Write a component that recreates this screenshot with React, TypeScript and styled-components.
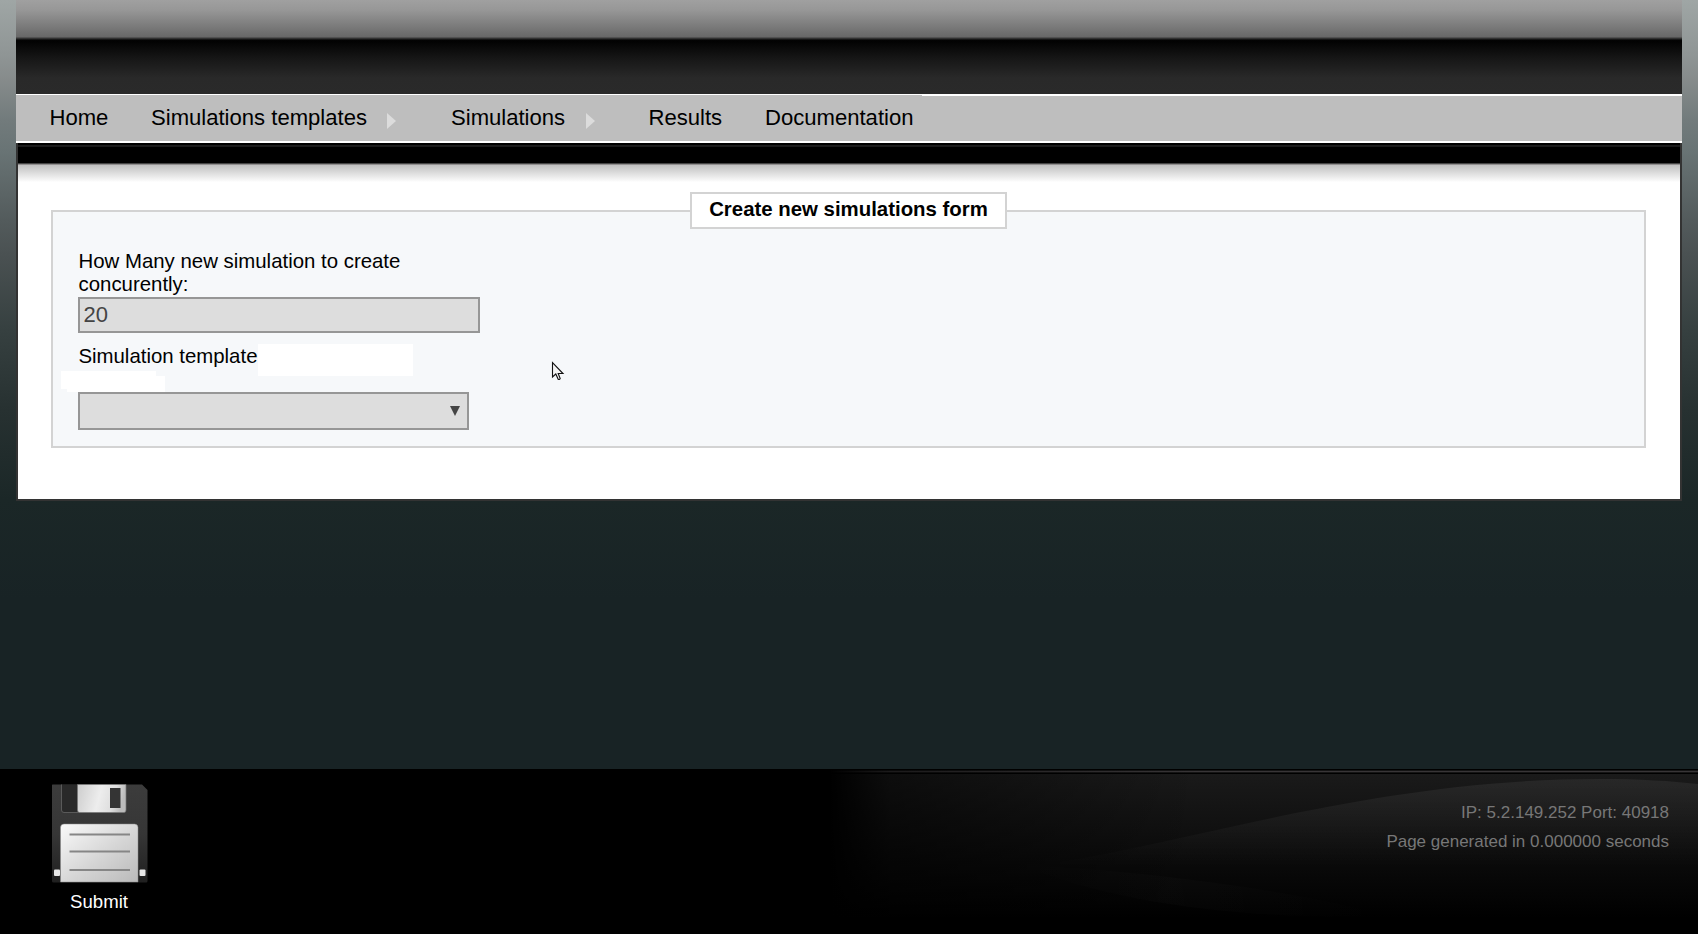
import React from 'react';
import styled, { createGlobalStyle } from 'styled-components';

const Global = createGlobalStyle`
  * { box-sizing: border-box; }
  html, body { margin: 0; height: 100%; overflow: hidden; }
  body { font-family: "Liberation Sans", Arial, sans-serif; background: #182325; }
`;

const Page = styled.div`
  position: relative;
  display: flex;
  flex-direction: column;
  height: 934px;
  background: linear-gradient(180deg, #9fa6a5 0px, #8f9595 55px, #868b8b 80px, #727b7c 120px, #697475 150px, #535b5c 220px,
    #4a5152 255px, #364040 330px, #273131 410px, #1b2727 500px, #182325 600px);
`;

const Sheet = styled.div`
  margin: 0 16px;
  display: flex;
  flex-direction: column;
`;

const Banner = styled.header`
  height: 94px;
  background: linear-gradient(180deg, #a0a0a0 0px, #979797 10px, #686868 37px, #3a3a3a 38px, #2a2a2a 39px, #050505 40px,
    #020202 41px, #161616 58px, #292929 78px, #2a2a2a 94px);
`;

const NavBar = styled.div`
  height: 49px;
  display: flex;
  background: #bebebe;
  border-top: 1px solid #fff;
  border-bottom: 2px solid #fff;
`;

const NavList = styled.nav`
  display: flex;
  width: 906px;
  padding-left: 33.5px;
`;

const NavItem = styled.a<{ $w: number }>`
  display: flex;
  flex: none;
  width: ${(p) => p.$w}px;
  height: 45px;
  font-size: 22.08px;
  line-height: 45px;
  white-space: nowrap;
  color: #000;
`;

const NavRest = styled.div`
  flex: 1;
  border-top: 1px solid #fff;
`;

const Arrow = styled.svg`
  width: 9px;
  height: 16px;
  margin: 18px 0 0 20.5px;
`;

const Panel = styled.main`
  height: 358px;
  border: 2px solid #333;
  border-top: 0;
  background: #fff linear-gradient(180deg, #000 0px, #000 1.5px, #1e1e1e 2px, #1a1a1a 3.5px, #000 4px, #000 20px, #444 20px,
    #444 21px, #918f8f 21px, #918f8f 22px, #c0c0c0 22px, #fafafa 38px, #fff 39px) no-repeat;
  padding: 49px 34px 0 33px;
`;

const Form = styled.fieldset`
  margin: 0;
  height: 256px;
  border: 2px solid #d3d3d3;
  padding: 0 25px;
  background: #f6f8fa;
  min-width: 0;
`;

const Legend = styled.legend`
  margin: 0 auto;
  width: 317px;
  height: 37px;
  border: 2px solid #d3d3d3;
  background: #fff;
  font-size: 20.4px;
  line-height: 31px;
  font-weight: bold;
  text-align: center;
  padding: 0;
`;

const Label = styled.label`
  display: block;
  width: 380px;
  margin-top: 21px;
  padding-left: 0.5px;
  font-size: 20.4px;
  line-height: 23px;
  color: #000;
`;

const NumberInput = styled.input`
  display: block;
  width: 402px;
  height: 36px;
  margin: 1px 0 11px;
  padding: 0 3.5px;
  border: 2px solid #969696;
  border-radius: 0;
  background: #ddd;
  color: #444;
  font: 22px "Liberation Sans", Arial, sans-serif;
`;

const TemplateRow = styled.div`
  display: flex;
  height: 32px;
  font-size: 20.4px;
  line-height: 24px;
  white-space: nowrap;
`;

const TemplateLabel = styled.label`
  width: 180px;
  padding-left: 0.4px;
`;

const Blank = styled.span`
  width: 155px;
  background: #fff;
`;

const BlankNote = styled.div`
  width: 104px;
  height: 21px;
  margin: -5px 0 0 -17px;
  background: #fff;
  clip-path: polygon(0 0, 95px 0, 95px 5px, 104px 5px, 104px 21px, 6px 21px, 6px 18px, 0 18px);
`;

const Select = styled.div`
  display: flex;
  justify-content: flex-end;
  width: 391px;
  height: 38px;
  border: 2px solid #969696;
  background: #ddd;
  padding: 12px 7px 0 0;
`;

const Footer = styled.footer`
  position: relative;
  height: 165px;
  margin-top: auto;
  background: #000;
  display: flex;
  justify-content: space-between;
`;

const Backdrop = styled.svg`
  position: absolute;
  right: 0;
  top: 0;
`;

const SubmitButton = styled.a`
  display: flex;
  flex-direction: column;
  align-items: center;
  gap: 7px;
  width: 98px;
  margin: 15px 0 0 50px;
  color: #fff;
  font-size: 18.6px;
  line-height: 22px;
`;

const Stats = styled.div`
  position: relative;
  margin: 29px 29px 0 0;
  font-size: 17px;
  line-height: 29px;
  color: #777;
  text-align: right;
`;

const Disk = styled.svg`
  filter: blur(0.6px);
`;

const Pointer = styled.svg`
  position: absolute;
  left: 551px;
  top: 361px;
`;

const SubmenuArrow = () => (
  <Arrow viewBox="0 0 9 16">
    <path d="M0 0L9 8L0 16Z" fill="#dcdcdc" />
  </Arrow>
);

const Floppy = () => (
  <Disk width="98" height="100" viewBox="0 0 98 100">
    <defs>
      <linearGradient id="body" x1="0" y1="0" x2="0" y2="1">
        <stop offset="0" stopColor="#3c3c3c" />
        <stop offset="0.5" stopColor="#363636" />
        <stop offset="1" stopColor="#202020" />
      </linearGradient>
      <linearGradient id="metal" x1="0" y1="0" x2="1" y2="0.15">
        <stop offset="0" stopColor="#cdcdcd" />
        <stop offset="0.5" stopColor="#ededed" />
        <stop offset="0.8" stopColor="#dedede" />
        <stop offset="1" stopColor="#bbb" />
      </linearGradient>
      <linearGradient id="paper" x1="0" y1="0" x2="1" y2="1">
        <stop offset="0" stopColor="#fafafa" />
        <stop offset="0.55" stopColor="#d5d5d5" />
        <stop offset="1" stopColor="#bababa" />
      </linearGradient>
    </defs>
    <path d="M2.5 0.5H92L97.5 6V97Q97.5 98.5 96 98.5H3.5Q2 98.5 2 97V1Z" fill="url(#body)" />
    <path d="M12 1H28V28H14Q12 28 12 26Z" fill="#292929" />
    <path d="M11.5 0.5V26Q11.5 28.5 14 28.5H28" fill="none" stroke="#5a5a5a" />
    <path d="M27.5 0.5H76V26Q76 28.5 74 28.5H29.5Q27.5 28.5 27.5 26Z" fill="url(#metal)" stroke="#777" strokeWidth="0.7" />
    <rect x="60" y="4" width="10.5" height="20" fill="#343434" />
    <path d="M10.5 98V43.5Q10.5 40 14 40H84.5Q88 40 88 43.5V98Z" fill="url(#paper)" stroke="#888" strokeWidth="0.5" />
    <path d="M19.5 50.5H80M19.5 67.5H80M19.5 86H80" stroke="#868686" strokeWidth="2" />
    <rect x="4" y="85.5" width="6" height="6.5" rx="1" fill="#e8e8e8" />
    <rect x="89.5" y="85.5" width="6" height="6.5" rx="1" fill="#e8e8e8" />
  </Disk>
);

const Waves = () => (
  <Backdrop width="868" height="165" viewBox="830 769 868 165">
    <defs>
      <linearGradient id="base" x1="0" y1="0" x2="0" y2="1">
        <stop offset="0" stopColor="#1a1a1a" />
        <stop offset="0.45" stopColor="#0d0d0d" />
        <stop offset="0.9" stopColor="#000" />
      </linearGradient>
      <linearGradient id="crest" gradientUnits="userSpaceOnUse" x1="0" y1="778" x2="0" y2="868">
        <stop offset="0" stopColor="#fff" stopOpacity="0.065" />
        <stop offset="0.35" stopColor="#fff" stopOpacity="0.045" />
        <stop offset="1" stopColor="#fff" stopOpacity="0" />
      </linearGradient>
      <linearGradient id="swell" gradientUnits="userSpaceOnUse" x1="1020" y1="0" x2="1390" y2="0">
        <stop offset="0" stopColor="#fff" stopOpacity="0" />
        <stop offset="0.4" stopColor="#fff" stopOpacity="0.015" />
        <stop offset="1" stopColor="#fff" stopOpacity="0" />
      </linearGradient>
      <linearGradient id="fade" gradientUnits="userSpaceOnUse" x1="830" y1="0" x2="1200" y2="0">
        <stop offset="0" stopColor="#000" />
        <stop offset="0.03" stopColor="#000" stopOpacity="0.9" />
        <stop offset="0.16" stopColor="#000" stopOpacity="0.5" />
        <stop offset="1" stopColor="#000" stopOpacity="0" />
      </linearGradient>
    </defs>
    <rect x="830" y="774" width="868" height="160" fill="url(#base)" />
    <path d="M1020 865C1130 870 1280 887 1390 916C1250 920 1120 905 1020 865Z" fill="url(#swell)" />
    <path d="M1060 862C1200 840 1380 779 1600 779C1640 779 1670 781 1698 784V868H1060Z" fill="url(#crest)" />
    <rect x="830" y="769" width="868" height="5" fill="#000" />
    <rect x="830" y="770" width="868" height="3" fill="#151515" />
    <rect x="830" y="771" width="868" height="1" fill="#383537" />
    <rect x="830" y="769" width="868" height="165" fill="url(#fade)" />
  </Backdrop>
);

export default function App() {
  return (
    <Page>
      <Global />
      <Sheet>
        <Banner />
        <NavBar>
          <NavList>
            <NavItem $w={101.5}>Home</NavItem>
            <NavItem $w={300}>Simulations templates<SubmenuArrow /></NavItem>
            <NavItem $w={197.5}>Simulations<SubmenuArrow /></NavItem>
            <NavItem $w={116.5}>Results</NavItem>
            <NavItem $w={148}>Documentation</NavItem>
          </NavList>
          <NavRest />
        </NavBar>
        <Panel>
          <Form>
            <Legend>Create new simulations form</Legend>
            <Label htmlFor="count">How Many new simulation to create concurently:</Label>
            <NumberInput id="count" defaultValue="20" />
            <TemplateRow>
              <TemplateLabel>Simulation template</TemplateLabel>
              <Blank />
            </TemplateRow>
            <BlankNote />
            <Select>
              <svg width="10" height="10" viewBox="0 0 10 10">
                <path d="M0 0H10L5 10Z" fill="#444" />
              </svg>
            </Select>
          </Form>
        </Panel>
      </Sheet>
      <Footer>
        <Waves />
        <SubmitButton>
          <Floppy />
          <span>Submit</span>
        </SubmitButton>
        <Stats>
          <div>IP: 5.2.149.252 Port: 40918</div>
          <div>Page generated in 0.000000 seconds</div>
        </Stats>
      </Footer>
      <Pointer width="14" height="20" viewBox="0 0 14 20">
        <path d="M1.5 1.5V16L4.8 13L7.2 18.3Q8.5 19 9.2 17.5L7.2 12.5H12Z" fill="#f4f4f4" stroke="#111" strokeWidth="1.1" />
      </Pointer>
    </Page>
  );
}
